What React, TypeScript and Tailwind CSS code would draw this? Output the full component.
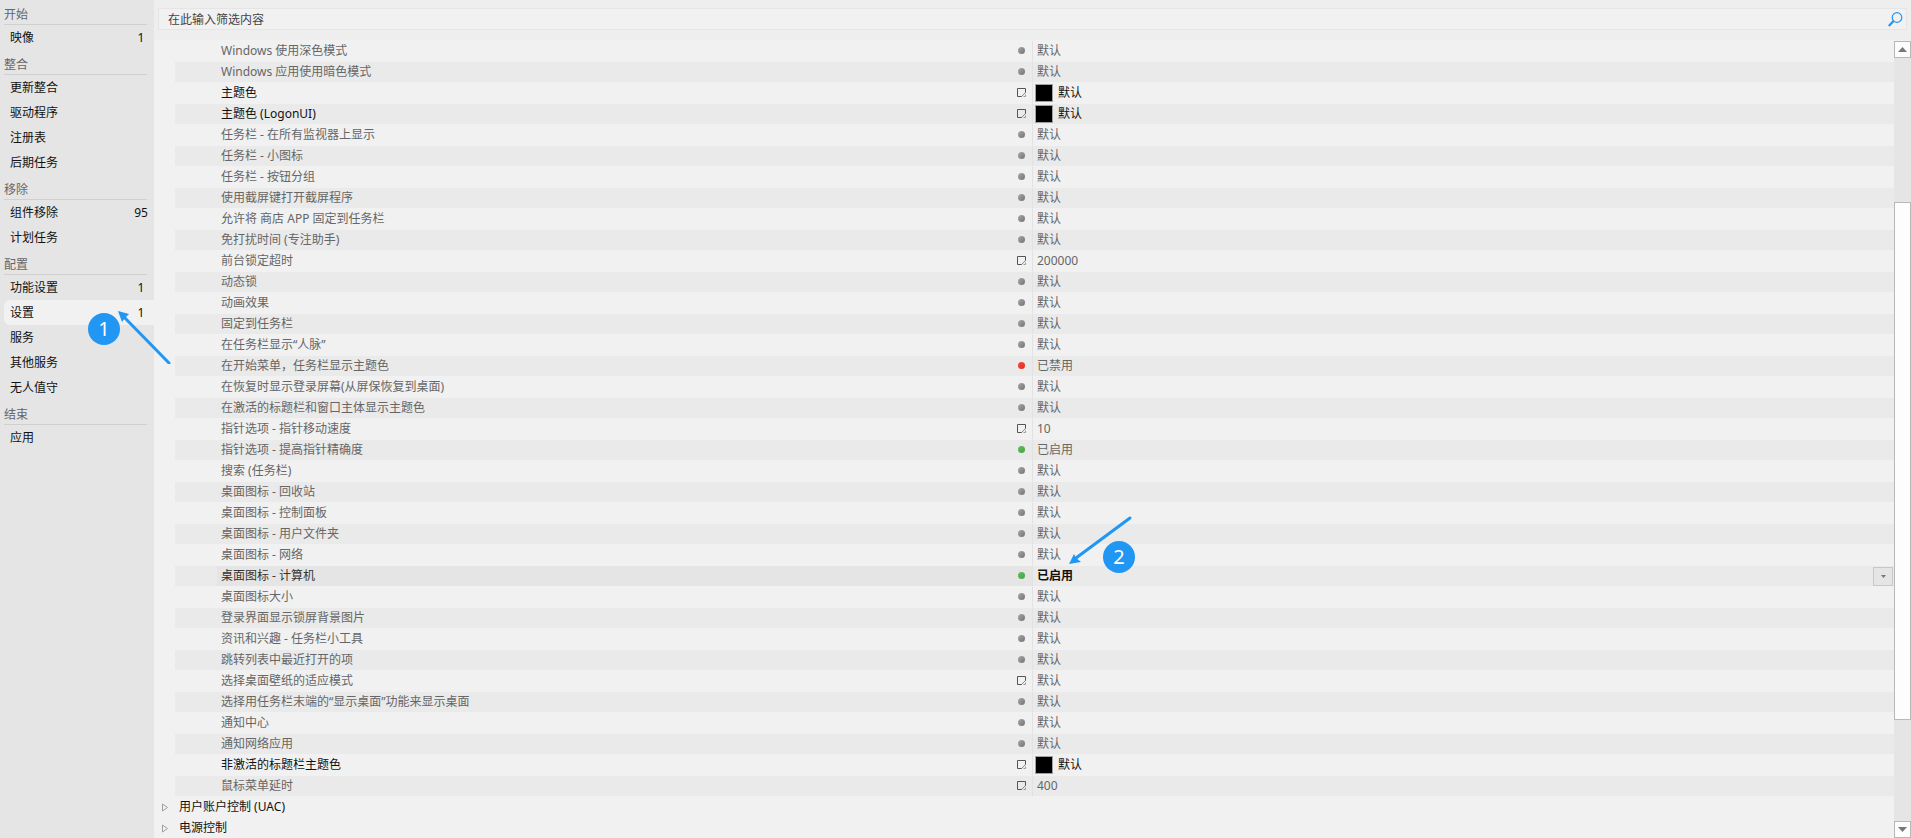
import { useState } from 'react'

type Kind = 'gray' | 'red' | 'green' | 'edit'

interface Setting {
  name: string
  kind?: Kind
  value?: string
  swatch?: boolean
}

const NAV = [
  { title: '开始', items: [{ label: '映像', count: 1 }] },
  {
    title: '整合',
    items: [{ label: '更新整合' }, { label: '驱动程序' }, { label: '注册表' }, { label: '后期任务' }],
  },
  { title: '移除', items: [{ label: '组件移除', count: 95 }, { label: '计划任务' }] },
  {
    title: '配置',
    items: [
      { label: '功能设置', count: 1 },
      { label: '设置', count: 1 },
      { label: '服务' },
      { label: '其他服务' },
      { label: '无人值守' },
    ],
  },
  { title: '结束', items: [{ label: '应用' }] },
] as { title: string; items: { label: string; count?: number }[] }[]

const SETTINGS: Setting[] = [
  { name: 'Windows 使用深色模式' },
  { name: 'Windows 应用使用暗色模式' },
  { name: '主题色', kind: 'edit', swatch: true },
  { name: '主题色 (LogonUI)', kind: 'edit', swatch: true },
  { name: '任务栏 - 在所有监视器上显示' },
  { name: '任务栏 - 小图标' },
  { name: '任务栏 - 按钮分组' },
  { name: '使用截屏键打开截屏程序' },
  { name: '允许将 商店 APP 固定到任务栏' },
  { name: '免打扰时间 (专注助手)' },
  { name: '前台锁定超时', kind: 'edit', value: '200000' },
  { name: '动态锁' },
  { name: '动画效果' },
  { name: '固定到任务栏' },
  { name: '在任务栏显示“人脉”' },
  { name: '在开始菜单，任务栏显示主题色', kind: 'red', value: '已禁用' },
  { name: '在恢复时显示登录屏幕(从屏保恢复到桌面)' },
  { name: '在激活的标题栏和窗口主体显示主题色' },
  { name: '指针选项 - 指针移动速度', kind: 'edit', value: '10' },
  { name: '指针选项 - 提高指针精确度', kind: 'green', value: '已启用' },
  { name: '搜索 (任务栏)' },
  { name: '桌面图标 - 回收站' },
  { name: '桌面图标 - 控制面板' },
  { name: '桌面图标 - 用户文件夹' },
  { name: '桌面图标 - 网络' },
  { name: '桌面图标 - 计算机', kind: 'green', value: '已启用' },
  { name: '桌面图标大小' },
  { name: '登录界面显示锁屏背景图片' },
  { name: '资讯和兴趣 - 任务栏小工具' },
  { name: '跳转列表中最近打开的项' },
  { name: '选择桌面壁纸的适应模式', kind: 'edit' },
  { name: '选择用任务栏末端的“显示桌面”功能来显示桌面' },
  { name: '通知中心' },
  { name: '通知网络应用' },
  { name: '非激活的标题栏主题色', kind: 'edit', swatch: true },
  { name: '鼠标菜单延时', kind: 'edit', value: '400' },
]

const GROUPS = ['用户账户控制 (UAC)', '电源控制']

const DOTS = {
  gray: 'bg-linear-to-br from-[#a8a8aa] to-[#737377]',
  red: 'bg-linear-to-br from-[#f4473c] to-[#e32a20]',
  green: 'bg-linear-to-br from-[#62bd60] to-[#46a345]',
}

function StateIcon({ kind }: { kind: Kind }) {
  if (kind === 'edit') {
    return (
      <svg className="mb-px h-[9px] w-[9px]" viewBox="0 0 9 9" fill="none" stroke="#555">
        <path d="M5 8.5H.5V.5h8V5" />
        <path d="M4.5 8.5l4-4" stroke="#888" />
        <path d="M6.5 8.5h2v-2" stroke="#999" />
      </svg>
    )
  }
  return <span className={`mr-px mb-px h-[7px] w-[7px] rounded-full ${DOTS[kind]}`} />
}

function Sidebar({ current, onSelect }: { current: string; onSelect: (label: string) => void }) {
  return (
    <nav className="w-[154px] shrink-0 bg-[#e5e5e5] pl-1">
      {NAV.map((group) => (
        <section key={group.title}>
          <h2 className="mr-[7px] h-[25px] border-b border-[#d0d0d0] pt-1 leading-[22px] text-[#666]">{group.title}</h2>
          {group.items.map((item) => (
            <button
              key={item.label}
              onClick={() => onSelect(item.label)}
              className={`flex h-[25px] w-full items-center justify-between rounded-l-md pr-[5px] pl-1.5 ${
                item.label === current ? 'bg-[#f1f1f1]' : ''
              }`}
            >
              <span>{item.label}</span>
              {item.count && <span className="w-4 text-center">{item.count}</span>}
            </button>
          ))}
        </section>
      ))}
    </nav>
  )
}

function SettingRow({ row, odd, selected, onSelect }: { row: Setting; odd: boolean; selected: boolean; onSelect: () => void }) {
  const { name, kind = 'gray', value = '默认', swatch } = row
  const band = odd ? 'bg-[#eaeaea]' : ''
  const color = swatch || selected ? 'text-[#111]' : 'text-[#666]'
  return (
    <tr className={`h-[21px] ${color}`} onClick={onSelect}>
      <td className="p-0" />
      <td className={`border-b border-[#f1f1f1] p-0 ${band}`}>
        <div className={`ml-[42px] flex h-5 items-center justify-between pr-1.5 pl-1 ${selected ? 'bg-[#e5e5e5]' : ''}`}>
          <span className={selected ? 'text-[#333]' : ''}>{name}</span>
          <StateIcon kind={kind} />
        </div>
      </td>
      <td className={`border-b border-l border-b-[#f1f1f1] border-l-[#e2e2e2] p-0 ${band}`}>
        <div className={`flex h-5 items-center ${swatch ? 'gap-[5px] pl-0.5' : 'pl-1'}`}>
          {swatch && <span className="h-[18px] w-[18px] border border-[#a0a0a0] bg-black" />}
          <span className={selected ? 'font-bold' : ''}>{value}</span>
          {selected && (
            <button
              aria-label="展开选项"
              className="mr-px ml-auto flex h-[19px] w-5 items-center justify-center border border-[#c8c8c8] bg-[#e5e5e5]"
            >
              <svg className="h-[3px] w-[5px]" viewBox="0 0 5 3" fill="#777">
                <path d="M0 0h5L2.5 3z" />
              </svg>
            </button>
          )}
        </div>
      </td>
    </tr>
  )
}

function ScrollBar() {
  return (
    <div className="mt-px flex w-[17px] shrink-0 flex-col bg-[#e5e5e5]">
      <button aria-label="向上滚动" className="flex h-[17px] items-center justify-center border border-[#b8b8b8] bg-[#fdfdfd]">
        <svg className="h-[5px] w-[9px]" viewBox="0 0 9 5" fill="#777">
          <path d="M4.5 0L9 5H0z" />
        </svg>
      </button>
      <div className="flex-[144]" />
      <div className="flex-[518] border border-[#b8b8b8] bg-[#fdfdfd]" />
      <div className="flex-[101]" />
      <button aria-label="向下滚动" className="flex h-[17px] items-center justify-center border border-[#b8b8b8] bg-[#fdfdfd]">
        <svg className="h-[5px] w-[9px]" viewBox="0 0 9 5" fill="#777">
          <path d="M0 0h9L4.5 5z" />
        </svg>
      </button>
    </div>
  )
}

// numbered step marker with an arrow pointing at the control
function Step({ n }: { n: number }) {
  return (
    <span className="flex h-8 w-8 items-center justify-center rounded-full bg-[#2196f3] text-xl text-white">{n}</span>
  )
}

export default function App() {
  const [page, setPage] = useState('设置')
  const [active, setActive] = useState('桌面图标 - 计算机')
  const [filter, setFilter] = useState('')
  const rows = SETTINGS.filter((s) => s.name.includes(filter))

  return (
    <div className="relative flex h-screen overflow-hidden bg-[#eee] font-['Noto_Sans','Noto_Sans_CJK_SC',sans-serif] text-xs text-[#111]">
      <Sidebar current={page} onSelect={setPage} />

      <main className="flex min-w-0 flex-1 flex-col">
        <label className="mx-1 mt-2 mb-2.5 flex h-[22px] shrink-0 items-center border border-[#e5e5e5] bg-[#f1f1f1] pt-px pr-[3px] pl-[9px]">
          <input
            value={filter}
            onChange={(e) => setFilter(e.target.value)}
            aria-label="筛选"
            placeholder="在此输入筛选内容"
            className="flex-1 bg-transparent outline-none placeholder:text-[#444]"
          />
          <svg className="h-[15px] w-[15px]" viewBox="0 0 15 15" fill="none" stroke="#2196f3">
            <circle cx="9" cy="5.5" r="4.8" strokeWidth="1.2" />
            <path d="M5.5 9L.8 14" strokeWidth="2.2" />
          </svg>
        </label>

        <div className="flex min-h-0 flex-1 bg-[#f1f1f1]">
          <div className="min-w-0 flex-1 overflow-hidden pt-px">
            <table className="w-full table-fixed border-separate border-spacing-0">
              <colgroup>
                <col className="w-[21px]" />
                <col className="w-[49.25%]" />
                <col />
              </colgroup>
              <tbody>
                {rows.map((row, i) => (
                  <SettingRow
                    key={row.name}
                    row={row}
                    odd={i % 2 === 1}
                    selected={row.name === active}
                    onSelect={() => setActive(row.name)}
                  />
                ))}
                {GROUPS.map((name) => (
                  <tr key={name} className="h-[21px]">
                    <td className="p-0 align-top" colSpan={3}>
                      <button className="flex h-5 items-center gap-2.5 pl-2">
                        <svg className="h-[9px] w-[7px]" viewBox="0 0 7 9" fill="none" stroke="#a0a0a0">
                          <path d="M.5 1v7L5.5 4.5z" />
                        </svg>
                        {name}
                      </button>
                    </td>
                  </tr>
                ))}
              </tbody>
            </table>
          </div>
          <ScrollBar />
        </div>
      </main>

      <div className="pointer-events-none absolute top-[313px] left-[88px]">
        <Step n={1} />
      </div>
      <svg className="pointer-events-none absolute top-[308px] left-[116px] h-14 w-14" viewBox="0 0 56 56">
        <path d="M8 9L53 55" stroke="#2196f3" strokeWidth="3" strokeLinecap="round" />
        <path d="M2 3L13 6L9 10L6 14z" fill="#2196f3" />
      </svg>
      <div className="pointer-events-none absolute top-[541px] left-[1103px]">
        <Step n={2} />
      </div>
      <svg className="pointer-events-none absolute top-[514px] left-[1066px] h-[52px] w-[68px]" viewBox="0 0 68 52">
        <path d="M10 44L64 4" stroke="#2196f3" strokeWidth="3" strokeLinecap="round" />
        <path d="M3 50L8 40L10 44L15 48z" fill="#2196f3" />
      </svg>
    </div>
  )
}
